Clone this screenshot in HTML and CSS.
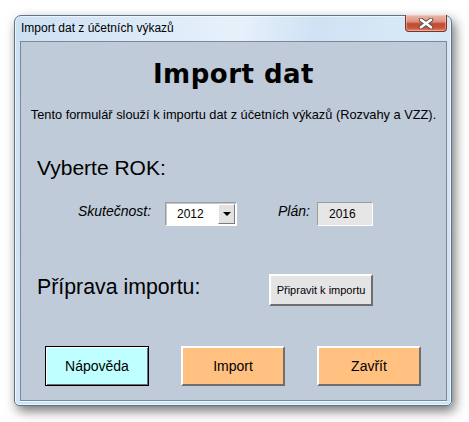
FILE: index.html
```html
<!DOCTYPE html>
<html lang="cs">
<head>
<meta charset="utf-8">
<title>Import dat z účetních výkazů</title>
<link rel="stylesheet" href="styles.css">
</head>
<body>
<div class="desktop">
  <div class="window">
    <div class="titlebar">
      <span class="title">Import dat z účetních výkazů</span>
      <button class="close" aria-label="Zavřít">
        <svg width="16" height="11" viewBox="0 0 16 11">
          <path d="M3 1.8 L13 9.2 M13 1.8 L3 9.2" stroke="#505050" stroke-width="4.4" stroke-linecap="round" fill="none"/>
          <path d="M3 1.8 L13 9.2 M13 1.8 L3 9.2" stroke="#ffffff" stroke-width="2.6" stroke-linecap="round" fill="none"/>
        </svg>
      </button>
    </div>
    <div class="client">
      <h1 class="heading">Import dat</h1>
      <p class="desc">Tento formulář slouží k importu dat z účetních výkazů (Rozvahy a VZZ).</p>
      <div class="section-label">Vyberte ROK:</div>
      <div class="year-row">
        <span class="field-label label-actual">Skutečnost:</span>
        <div class="combo">
          <span class="combo-value">2012</span>
          <span class="combo-btn"><span class="arrow"></span></span>
        </div>
        <span class="field-label label-plan">Plán:</span>
        <div class="textbox">2016</div>
      </div>
      <div class="prep-row">
        <span class="section-label prep-label">Příprava importu:</span>
        <button class="btn btn-prep">Připravit k importu</button>
      </div>
      <div class="actions">
        <button class="btn btn-big btn-help">Nápověda</button>
        <button class="btn btn-big btn-orange">Import</button>
        <button class="btn btn-big btn-orange">Zavřít</button>
      </div>
    </div>
  </div>
</div>
</body>
</html>
```
FILE: styles.css
```css
* { box-sizing: border-box; }

body {
  margin: 0;
  background: #ffffff;
  font-family: "Liberation Sans", Arial, sans-serif;
  color: #000;
}

.desktop {
  width: 469px;
  height: 422px;
  padding: 15px 0 0 14px;
}

.window {
  width: 438px;
  height: 391px;
  border: 1px solid #5f7286;
  border-radius: 7px 7px 5px 5px;
  background: linear-gradient(100deg, #cbe0f3 0%, #dbeaf8 25%, #e6f1fb 45%, #cfe2f4 60%, #d9e9f7 80%, #cde1f4 100%);
  box-shadow: 3px 5px 12px rgba(0, 0, 0, 0.55), inset 0 0 0 1px rgba(255, 255, 255, 0.6), inset 0 -3px 0 #c4e6f8;
  display: flex;
  flex-direction: column;
  padding: 0 4px 4px 5px;
}

.titlebar {
  height: 25px;
  display: flex;
  align-items: flex-start;
}

.title {
  font-size: 12px;
  line-height: 25px;
  padding-left: 1px;
  color: #000;
}

.close {
  margin: -1px 0 0 auto;
  width: 42px;
  height: 17px;
  padding: 0;
  border: 1px solid #7a3328;
  border-top: none;
  border-radius: 0 0 4px 4px;
  background: linear-gradient(180deg, #ecb8aa 0%, #dc9481 40%, #c24a35 55%, #c8533c 80%, #e08a6e 100%);
  display: flex;
  align-items: center;
  justify-content: center;
  box-shadow: inset 0 0 0 1px rgba(255, 220, 210, 0.45);
}

.close svg { display: block; }

.client {
  flex: 1;
  background: #bfcbd9;
  border: 1px solid #7d8795;
  box-shadow: 0 1px 0 #f2f9fe;
  display: flex;
  flex-direction: column;
}

.heading {
  margin: 17px 0 0;
  font-family: "DejaVu Sans", Verdana, sans-serif;
  font-weight: bold;
  font-size: 26px;
  line-height: 30px;
  letter-spacing: 0.5px;
  text-align: center;
}

.desc {
  margin: 19px 0 0;
  font-size: 12.8px;
  line-height: 14px;
  text-align: center;
}

.section-label {
  font-size: 21px;
  line-height: 24px;
}

.client > .section-label {
  margin: 34px 0 0 16px;
}

.year-row {
  margin-top: 22px;
  padding-left: 57px;
  display: flex;
  align-items: flex-start;
}

.field-label {
  font-style: italic;
  font-size: 14px;
  line-height: 18px;
}

.label-actual { width: 87px; }

.label-plan {
  width: 39px;
  margin-left: 41px;
}

.combo {
  width: 72px;
  height: 24px;
  background: #fff;
  border: 1px solid;
  border-color: #9c9c9c #ffffff #ffffff #9c9c9c;
  box-shadow: inset 1px 1px 0 #c8c8c8;
  display: flex;
  align-items: center;
  padding: 1px 1px 1px 0;
}

.combo-value {
  flex: 1;
  font-size: 12px;
  padding-left: 11px;
}

.combo-btn {
  width: 17px;
  height: 20px;
  background: #e2e2e2;
  border: 1px solid;
  border-color: #ffffff #7a7a7a #7a7a7a #ffffff;
  display: flex;
  align-items: center;
  justify-content: center;
}

.arrow {
  width: 0;
  height: 0;
  border-left: 4px solid transparent;
  border-right: 4px solid transparent;
  border-top: 4px solid #000;
}

.textbox {
  width: 56px;
  height: 24px;
  background: #e6e6e6;
  border: 1px solid;
  border-color: #9c9c9c #ffffff #ffffff #9c9c9c;
  font-size: 12px;
  line-height: 22px;
  padding-left: 11px;
}

.prep-row {
  margin-top: 48px;
  padding-left: 16px;
  display: flex;
  align-items: flex-start;
}

.prep-label {
  width: 232px;
  font-size: 21.3px;
  line-height: 27px;
}

.btn {
  font-family: "Liberation Sans", Arial, sans-serif;
  color: #000;
  padding: 0;
  border: 2px solid;
  border-color: #ffffff #6e6e6e #6e6e6e #ffffff;
}

.btn-prep {
  width: 104px;
  height: 32px;
  background: #e4e4e4;
  font-size: 11px;
}

.actions {
  margin: auto 0 14px 24px;
  display: flex;
  gap: 32px;
}

.btn-big {
  width: 104px;
  height: 40px;
  font-size: 14px;
}

.btn-help {
  background: #bfffff;
  border: 1px solid #000;
  box-shadow: inset 1px 1px 0 #ffffff, inset -1px -1px 0 #6e6e6e;
}

.btn-orange {
  background: #ffc080;
}
```
